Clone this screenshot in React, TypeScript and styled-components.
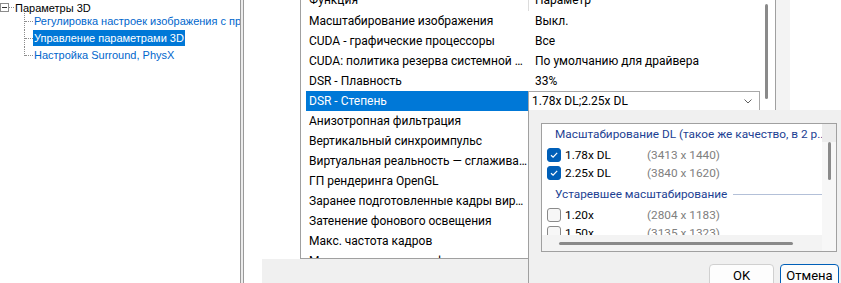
import React from "react";
import styled, { createGlobalStyle } from "styled-components";

const UI = `"Segoe UI", Roboto, "Noto Sans", sans-serif`;
const TREE = `Tahoma, "Liberation Sans", Arial, sans-serif`;

const GlobalStyle = createGlobalStyle`
  html, body {
    margin: 0;
    padding: 0;
    background: #ffffff;
    overflow: hidden;
  }
  * {
    box-sizing: border-box;
  }
`;

type Row = { name: string; value?: string; selected?: boolean };

const rows: Row[] = [
  { name: "Масштабирование изображения", value: "Выкл." },
  { name: "CUDA - графические процессоры", value: "Все" },
  { name: "CUDA: политика резерва системной памяти", value: "По умолчанию для драйвера" },
  { name: "DSR - Плавность", value: "33%" },
  { name: "DSR - Степень", selected: true },
  { name: "Анизотропная фильтрация", value: "" },
  { name: "Вертикальный синхроимпульс", value: "" },
  { name: "Виртуальная реальность — сглаживание (FXAA)", value: "" },
  { name: "ГП рендеринга OpenGL", value: "" },
  { name: "Заранее подготовленные кадры виртуальной реальности", value: "" },
  { name: "Затенение фонового освещения", value: "" },
  { name: "Макс. частота кадров", value: "" },
  { name: "Макс. частота кадров фонового приложения", value: "" },
];

type Factor = { label: string; res: string; checked: boolean };

const dlFactors: Factor[] = [
  { label: "1.78x DL", res: "(3413 x 1440)", checked: true },
  { label: "2.25x DL", res: "(3840 x 1620)", checked: true },
];

const legacyFactors: Factor[] = [
  { label: "1.20x", res: "(2804 x 1183)", checked: false },
  { label: "1.50x", res: "(3135 x 1323)", checked: false },
];

const CheckIcon = () => (
  <svg width="10" height="10" viewBox="0 0 10 10">
    <path d="M2 5.2 L4.1 7.2 L8.2 2.9" fill="none" stroke="#fff" strokeWidth="1.2" />
  </svg>
);

const Chevron = () => (
  <svg width="8" height="5" viewBox="0 0 8 5">
    <path d="M0.5 0.5 L4 4 L7.5 0.5" fill="none" stroke="#606060" strokeWidth="1" />
  </svg>
);

const App: React.FC = () => {
  return (
    <>
      <GlobalStyle />
      <Window>
        <TreePanel>
          <TreeRoot>
            <MinusBox />
            <RootStub />
            <RootLabel>Параметры 3D</RootLabel>
          </TreeRoot>
          <TreeChildren>
            <TreeItem>
              <Stub />
              <ItemLabel>Регулировка настроек изображения с просмотром</ItemLabel>
            </TreeItem>
            <TreeItem>
              <Stub />
              <ItemLabel selected>Управление параметрами 3D</ItemLabel>
            </TreeItem>
            <TreeItem last>
              <Stub />
              <ItemLabel>Настройка Surround, PhysX</ItemLabel>
            </TreeItem>
          </TreeChildren>
        </TreePanel>
        <Splitter />
        <MainPane>
          <TopArea>
            <Gutter />
            <TableBox>
              <TableBody>
                <HeaderRow>
                  <HeadCell>Функция</HeadCell>
                  <HeadCell second>Параметр</HeadCell>
                </HeaderRow>
                {rows.map((r) => (
                  <TableRow key={r.name}>
                    <NameCell selected={r.selected}>{r.name}</NameCell>
                    {r.selected ? (
                      <Combo>
                        <span>1.78x DL;2.25x DL</span>
                        <Chevron />
                      </Combo>
                    ) : (
                      <ValueCell>{r.value}</ValueCell>
                    )}
                  </TableRow>
                ))}
              </TableBody>
              <ScrollTrack>
                <ScrollThumb />
              </ScrollTrack>
            </TableBox>
            <SideStrip />
          </TopArea>
          <BottomArea>
            <BottomGray />
          </BottomArea>

          <Dropdown>
            <ListFrame>
              <ListMain>
                <List>
                  <GroupHeader>Масштабирование DL (такое же качество, в 2 р..</GroupHeader>
                  {dlFactors.map((f) => (
                    <FactorRow key={f.label}>
                      <Box checked={f.checked}>{f.checked && <CheckIcon />}</Box>
                      <FactorLabel>{f.label}</FactorLabel>
                      <FactorRes>{f.res}</FactorRes>
                    </FactorRow>
                  ))}
                  <GroupHeader spaced>
                    <span>Устаревшее масштабирование</span>
                    <GroupLine />
                  </GroupHeader>
                  {legacyFactors.map((f) => (
                    <FactorRow key={f.label}>
                      <Box checked={f.checked}>{f.checked && <CheckIcon />}</Box>
                      <FactorLabel>{f.label}</FactorLabel>
                      <FactorRes>{f.res}</FactorRes>
                    </FactorRow>
                  ))}
                </List>
                <HScroll>
                  <HThumb />
                </HScroll>
              </ListMain>
              <VScroll>
                <VCorner />
                <VThumb />
              </VScroll>
            </ListFrame>
            <Buttons>
              <Button>OK</Button>
              <Button primary>Отмена</Button>
            </Buttons>
          </Dropdown>
        </MainPane>
      </Window>
    </>
  );
};

export default App;

const Window = styled.div`
  display: flex;
  width: 841px;
  height: 283px;
  overflow: hidden;
  font-family: ${UI};
  background: #ffffff;
`;

/* ---------- tree ---------- */

const TreePanel = styled.div`
  width: 240px;
  flex: none;
  overflow: hidden;
  background: #ffffff;
  font-family: ${TREE};
  font-size: 11px;
  white-space: nowrap;
`;

const TreeRoot = styled.div`
  display: flex;
  align-items: center;
  height: 13px;
  margin-top: 1px;
`;

const MinusBox = styled.div`
  position: relative;
  width: 9px;
  height: 9px;
  flex: none;
  border: 1px solid #8c8c8c;
  background: #fff;
  &::after {
    content: "";
    position: absolute;
    left: 1px;
    top: 3px;
    width: 5px;
    height: 1px;
    background: #333;
  }
`;

const RootStub = styled.div`
  width: 5px;
  margin-right: 1px;
  border-top: 1px dotted #8c8c8c;
`;

const RootLabel = styled.span`
  color: #000;
  line-height: 14px;
`;

const TreeChildren = styled.div`
  margin-left: 24px;
  margin-top: -1px;
`;

const TreeItem = styled.div<{ last?: boolean }>`
  display: flex;
  align-items: flex-start;
  height: ${(p) => (p.last ? "9px" : "17px")};
  border-left: 1px dotted #8c8c8c;
`;

const Stub = styled.div`
  width: 8px;
  flex: none;
  margin-top: 8px;
  border-top: 1px dotted #8c8c8c;
`;

const ItemLabel = styled.span<{ selected?: boolean }>`
  display: inline-block;
  flex: none;
  height: 16px;
  line-height: 16px;
  padding: 0 1px;
  color: ${(p) => (p.selected ? "#ffffff" : "#0066cc")};
  background: ${(p) => (p.selected ? "#0078d7" : "transparent")};
`;

const Splitter = styled.div`
  width: 4px;
  flex: none;
  border-left: 1px solid #9a9a9a;
  border-right: 1px solid #9a9a9a;
  background: #ececec;
`;

/* ---------- main pane ---------- */

const MainPane = styled.div`
  position: relative;
  flex: 1;
  display: flex;
  flex-direction: column;
  background: #ffffff;
`;

const TopArea = styled.div`
  display: flex;
  height: 259px;
  flex: none;
`;

const Gutter = styled.div`
  width: 56px;
  flex: none;
`;

const TableBox = styled.div`
  display: flex;
  width: 476px;
  height: 271px;
  margin-top: -12px;
  flex: none;
  overflow: hidden;
  border: 1px solid #a0a0a0;
  background: #ffffff;
  font-size: 12px;
  color: #000;
`;

const TableBody = styled.div`
  flex: 1;
  padding-left: 5px;
  min-width: 0;
`;

const HeaderRow = styled.div`
  display: flex;
  height: 22px;
  align-items: center;
`;

const HeadCell = styled.div<{ second?: boolean }>`
  width: ${(p) => (p.second ? "auto" : "222px")};
  flex: ${(p) => (p.second ? "1" : "none")};
  padding-left: ${(p) => (p.second ? "6px" : "3px")};
  height: 22px;
  line-height: 22px;
  border-left: ${(p) => (p.second ? "1px solid #dcdcdc" : "none")};
`;

const TableRow = styled.div`
  display: flex;
  height: 20px;
  align-items: stretch;
`;

const NameCell = styled.div<{ selected?: boolean }>`
  width: 222px;
  flex: none;
  padding-left: 3px;
  line-height: 20px;
  white-space: nowrap;
  overflow: hidden;
  text-overflow: ellipsis;
  color: ${(p) => (p.selected ? "#ffffff" : "#000000")};
  background: ${(p) => (p.selected ? "#0078d7" : "transparent")};
`;

const ValueCell = styled.div`
  flex: 1;
  padding-left: 7px;
  line-height: 20px;
  white-space: nowrap;
  overflow: hidden;
`;

const Combo = styled.div`
  width: 232px;
  flex: none;
  display: flex;
  align-items: center;
  justify-content: space-between;
  padding: 0 7px 0 3px;
  border: 1px solid #a8a8a8;
  background: #fff;
`;

const ScrollTrack = styled.div`
  width: 13px;
  flex: none;
  padding: 15px 0 0 3px;
`;

const ScrollThumb = styled.div`
  width: 3px;
  height: 95px;
  border-radius: 2px;
  background: #8a8a8a;
`;

const SideStrip = styled.div`
  width: 14px;
  flex: none;
  background: #f3f3f3;
`;

const BottomArea = styled.div`
  flex: 1;
  display: flex;
  padding-left: 18px;
`;

const BottomGray = styled.div`
  flex: 1;
  background: #f0f0f0;
`;

/* ---------- dropdown ---------- */

const Dropdown = styled.div`
  position: absolute;
  left: 284px;
  top: 110px;
  right: 0;
  bottom: 0;
  padding: 13px 2px 0 12px;
  background: #f0f0f0;
  border-left: 1px solid #a0a0a0;
`;

const ListFrame = styled.div`
  display: flex;
  height: 129px;
  margin-right: 2px;
  border: 1px solid #a0a0a0;
  background: #f3f3f3;
`;

const ListMain = styled.div`
  flex: 1;
  display: flex;
  flex-direction: column;
  min-width: 0;
`;

const List = styled.div`
  height: 111px;
  overflow: hidden;
  background: #ffffff;
  padding: 0 0 0 5px;
  font-size: 11.8px;
`;

const GroupHeader = styled.div<{ spaced?: boolean }>`
  display: flex;
  align-items: center;
  height: 20px;
  padding-left: 8px;
  margin: ${(p) => (p.spaced ? "2px 0 2px" : "0 0 2px")};
  color: #1d3f93;
  white-space: nowrap;
  overflow: hidden;
  line-height: 20px;
`;

const GroupLine = styled.div`
  flex: 1;
  height: 1px;
  margin-left: 6px;
  background: #b3c0d8;
`;

const FactorRow = styled.div`
  display: flex;
  align-items: center;
  height: 18px;
  white-space: nowrap;
`;

const Box = styled.div<{ checked: boolean }>`
  width: 14px;
  height: 14px;
  flex: none;
  display: flex;
  align-items: center;
  justify-content: center;
  border-radius: 3px;
  border: 1px solid ${(p) => (p.checked ? "#005fb8" : "#8a8a8a")};
  background: ${(p) => (p.checked ? "#005fb8" : "#f7f7f7")};
`;

const FactorLabel = styled.span`
  width: 86px;
  flex: none;
  padding-left: 4px;
  color: #000;
`;

const FactorRes = styled.span`
  color: #808080;
`;

const HScroll = styled.div`
  flex: 1;
  padding: 7px 0 0 17px;
`;

const HThumb = styled.div`
  width: 234px;
  height: 3px;
  border-radius: 2px;
  background: #8a8a8a;
`;

const VScroll = styled.div`
  width: 14px;
  flex: none;
  display: flex;
  flex-direction: column;
  align-items: center;
  background: #f7f7f7;
`;

const VCorner = styled.div`
  width: 14px;
  height: 18px;
  background: #ececec;
`;

const VThumb = styled.div`
  width: 3px;
  height: 38px;
  border-radius: 2px;
  background: #8a8a8a;
`;

const Buttons = styled.div`
  display: flex;
  justify-content: flex-end;
  gap: 6px;
  margin-top: 12px;
`;

const Button = styled.div<{ primary?: boolean }>`
  width: ${(p) => (p.primary ? "59px" : "65px")};
  height: 23px;
  display: flex;
  align-items: center;
  justify-content: center;
  font-size: 13px;
  color: #000;
  border-radius: 4px;
  background: #fdfdfd;
  border: 1px solid ${(p) => (p.primary ? "#005fb8" : "#d0d0d0")};
`;
